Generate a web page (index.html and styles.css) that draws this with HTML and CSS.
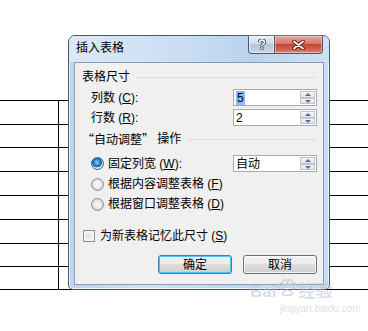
FILE: index.html
```html
<!DOCTYPE html>
<html lang="zh-CN">
  <head>
    <meta charset="UTF-8" />
    <title>插入表格</title>
    <link rel="stylesheet" href="styles.css">
  </head>
  <body>
    <div class="desk">
      <!-- table in the document behind the dialog -->
      <div class="doc-table">
        <div class="doc-row"><div class="doc-cell"></div></div>
        <div class="doc-row short"><div class="doc-cell"></div></div>
        <div class="doc-row"><div class="doc-cell"></div></div>
        <div class="doc-row"><div class="doc-cell"></div></div>
        <div class="doc-row"><div class="doc-cell"></div></div>
        <div class="doc-row"><div class="doc-cell"></div></div>
        <div class="doc-row short"><div class="doc-cell"></div></div>
        <div class="doc-row short"><div class="doc-cell"></div></div>
      </div>

      <!-- Insert table dialog -->
      <div class="dialog">
        <div class="titlebar">
          <span class="title">插入表格</span>
          <div class="caption-btns">
            <div class="cap-help">
              <svg width="10" height="11" viewBox="0 0 10 11">
                <path d="M2.5 3.2 Q2.5 1 5 1 Q7.5 1 7.5 3.2 Q7.5 4.6 5.6 5.3 Q5 5.6 5 6.8" fill="none" stroke="#3b4654" stroke-width="3.2"/>
                <rect x="3.4" y="7.6" width="3.2" height="3" fill="#3b4654"/>
                <path d="M2.5 3.2 Q2.5 1 5 1 Q7.5 1 7.5 3.2 Q7.5 4.6 5.6 5.3 Q5 5.6 5 6.8" fill="none" stroke="#fff" stroke-width="1.4"/>
                <rect x="4.2" y="8.3" width="1.6" height="1.6" fill="#fff"/>
              </svg>
            </div>
            <div class="cap-close">
              <svg width="13" height="10" viewBox="0 0 13 10">
                <path d="M2 1.5 L11 8.5 M11 1.5 L2 8.5" stroke="#4a1c18" stroke-width="3.6" stroke-linecap="round"/>
                <path d="M2 1.5 L11 8.5 M11 1.5 L2 8.5" stroke="#fff" stroke-width="1.8" stroke-linecap="round"/>
              </svg>
            </div>
          </div>
        </div>

        <div class="panel">
          <div class="group-head">表格尺寸</div>
          <div class="field">
            <span>列数 (<u>C</u>):</span>
            <div class="spin">
              <span class="spin-text"><span class="selected">5</span></span>
              <div class="spin-btns"><div class="spin-up"></div><div class="spin-down"></div></div>
            </div>
          </div>
          <div class="field second">
            <span>行数 (<u>R</u>):</span>
            <div class="spin">
              <span class="spin-text">2</span>
              <div class="spin-btns"><div class="spin-up"></div><div class="spin-down"></div></div>
            </div>
          </div>

          <div class="group-head group-two"><span class="cjk">“自动调整”</span>&nbsp;操作</div>
          <div class="field option-first">
            <label class="option"><span class="radio checked"></span>固定列宽 (<u>W</u>):</label>
            <div class="spin">
              <span class="spin-text">自动</span>
              <div class="spin-btns"><div class="spin-up"></div><div class="spin-down"></div></div>
            </div>
          </div>
          <div class="field option-row">
            <label class="option"><span class="radio"></span>根据内容调整表格 (<u>F</u>)</label>
          </div>
          <div class="field option-row">
            <label class="option"><span class="radio"></span>根据窗口调整表格 (<u>D</u>)</label>
          </div>

          <label class="remember"><span class="check"></span>为新表格记忆此尺寸 (<u>S</u>)</label>

          <div class="actions">
            <button class="btn default">确定</button>
            <button class="btn">取消</button>
          </div>
        </div>
      </div>

      <div class="watermark">
        <span class="wm-logo">Bai<svg class="paw" width="20" height="18" viewBox="0 0 20 18">
            <g fill="none" stroke="#c9ced6" stroke-width="1.2">
              <ellipse cx="4" cy="7" rx="2.2" ry="2.8"/>
              <ellipse cx="8" cy="3.5" rx="2.2" ry="2.8"/>
              <ellipse cx="13" cy="3.5" rx="2.2" ry="2.8"/>
              <ellipse cx="17" cy="7" rx="2.2" ry="2.8"/>
              <path d="M5 15 Q10 7 16 15 Q10 18 5 15 Z"/>
            </g>
          </svg>经验</span>
        <span class="wm-url">jingyan.baidu.com</span>
      </div>
    </div>
  </body>
</html>
```

FILE: styles.css
```css
* {
  margin: 0;
  padding: 0;
  box-sizing: border-box;
}
body {
  background: #fff;
  color: #000;
  font-family: "Liberation Sans", "Noto Sans CJK SC", sans-serif;
  font-size: 12px;
  line-height: 14px;
}
.desk {
  position: relative;
  width: 368px;
  height: 331px;
  overflow: hidden;
}
.cjk {
  font-family: "Noto Sans CJK SC", sans-serif;
}

/* document table */
.doc-table {
  margin-top: 100px;
  border-top: 1px solid #000;
}
.doc-row {
  height: 24px;
  border-bottom: 1px solid #000;
}
.doc-row.short {
  height: 23px;
}
.doc-cell {
  width: 59px;
  height: 100%;
  border-right: 1px solid #000;
}

/* dialog frame */
.dialog {
  position: absolute;
  left: 68px;
  top: 35px;
  width: 262px;
  height: 255px;
  border: 1px solid #48556a;
  border-radius: 7px 7px 5px 5px;
  background: linear-gradient(to right, #bcd5ee, #cfe1f4 30%, #c0d8f0 60%, #c8ddf3);
  box-shadow: inset 0 0 0 1px rgba(255, 255, 255, 0.7);
}
.titlebar {
  position: relative;
  height: 26px;
  padding: 5px 0 0 7px;
  border-radius: 6px 6px 0 0;
  background: linear-gradient(to right, #dbe9f7, #c9def3 45%, #b9d3ee 70%, #cfe2f5);
}
.title {
  font-size: 12px;
}
.caption-btns {
  position: absolute;
  top: -1px;
  right: 6px;
  display: flex;
}
.cap-help,
.cap-close {
  height: 19px;
  display: flex;
  align-items: center;
  justify-content: center;
  border: 1px solid #4d5967;
  border-top-color: #6b7684;
}
.cap-help {
  width: 26px;
  border-right: none;
  border-radius: 0 0 0 4px;
  background: linear-gradient(#e6eef7, #cfdceb 45%, #b4c6d9 50%, #c7d7e8);
  box-shadow: inset 0 0 0 1px rgba(255, 255, 255, 0.5);
}
.cap-close {
  width: 49px;
  border-radius: 0 0 4px 0;
  background: linear-gradient(#e7a79c, #d47a6c 45%, #c24634 50%, #d36a58 85%, #e39583);
  box-shadow: inset 0 0 0 1px rgba(255, 220, 210, 0.5);
}

/* content panel */
.panel {
  height: 223px;
  margin: 0 5px;
  padding: 7px 6px 0 7px;
  border: 1px solid #8a9db3;
  background: #f0f0f0;
}
.group-head {
  display: flex;
  align-items: center;
  height: 14px;
}
.group-head::after {
  content: "";
  flex: 1;
  height: 1px;
  margin-left: 6px;
  background: #d7e0e9;
}
.group-two {
  margin-top: 6px;
}
.field {
  display: flex;
  align-items: center;
  justify-content: space-between;
  height: 17px;
  margin-top: 5px;
  padding-left: 9px;
}
.field.second {
  margin-top: 3px;
}
.field.option-first {
  margin-top: 9px;
}
.field.option-row {
  height: 16px;
  margin-top: 4px;
}

/* spin boxes */
.spin {
  display: flex;
  width: 84px;
  height: 17px;
  border: 1px solid #a9abad;
  background: #fff;
}
.spin-text {
  flex: 1;
  padding: 1px 0 0 2px;
  line-height: 14px;
}
.selected {
  display: inline-block;
  background: #84bdee;
  padding: 0 1px;
}
.spin-btns {
  display: flex;
  flex-direction: column;
  justify-content: space-between;
  width: 16px;
  padding: 1px 1px 1px 0;
}
.spin-up,
.spin-down {
  position: relative;
  height: 7px;
  border: 1px solid #c2c4c7;
  background: linear-gradient(#f7f7f7, #e3e3e3);
}
.spin-up::after,
.spin-down::after {
  content: "";
  position: absolute;
  left: 4px;
  border-left: 3px solid transparent;
  border-right: 3px solid transparent;
}
.spin-up::after {
  top: 1px;
  border-bottom: 3px solid #4e6cb4;
}
.spin-down::after {
  top: 1px;
  border-top: 3px solid #4e6cb4;
}

/* radios and check */
.option,
.remember {
  display: flex;
  align-items: center;
}
.radio {
  width: 13px;
  height: 13px;
  margin-right: 4px;
  border: 1px solid #8f9090;
  border-radius: 50%;
  background: radial-gradient(circle at 50% 50%, #f4f4f4 35%, #d2d2d2 70%, #e9e9e9);
}
.radio.checked {
  border-color: #2c6293;
  background: radial-gradient(circle at 45% 40%, #9ad4fb 0, #3392d8 30%, #0f5b9c 52%, #dfe9f2 58%, #c7d6e4);
}
.remember {
  margin-top: 17px;
  padding-left: 1px;
}
.check {
  width: 12px;
  height: 12px;
  margin-right: 5px;
  border: 1px solid #8f9090;
  background: linear-gradient(135deg, #d6d6d6, #f7f7f7);
  box-shadow: inset 0 0 0 2px #f4f4f4;
}

/* buttons */
.actions {
  display: flex;
  justify-content: flex-end;
  gap: 11px;
  margin-top: 12px;
}
.btn {
  width: 74px;
  height: 19px;
  font: inherit;
  color: #000;
  border: 1px solid #707070;
  border-radius: 3px;
  background: linear-gradient(#f2f2f2, #ebebeb 50%, #dddddd 50%, #cfcfcf);
  box-shadow: inset 0 0 0 1px rgba(255, 255, 255, 0.8);
}
.btn.default {
  border-color: #3c7fb1;
  box-shadow: inset 0 0 0 1px #48c6f8;
}

/* baidu watermark */
.watermark {
  position: absolute;
  left: 250px;
  top: 281px;
  display: flex;
  flex-direction: column;
  color: rgba(190, 196, 204, 0.55);
}
.wm-logo {
  display: flex;
  align-items: center;
  font-size: 17px;
  line-height: 22px;
  font-weight: bold;
}
.paw {
  margin: -8px 1px 0;
}
.wm-url {
  padding-left: 30px;
  font-size: 10px;
  line-height: 12px;
}
```
